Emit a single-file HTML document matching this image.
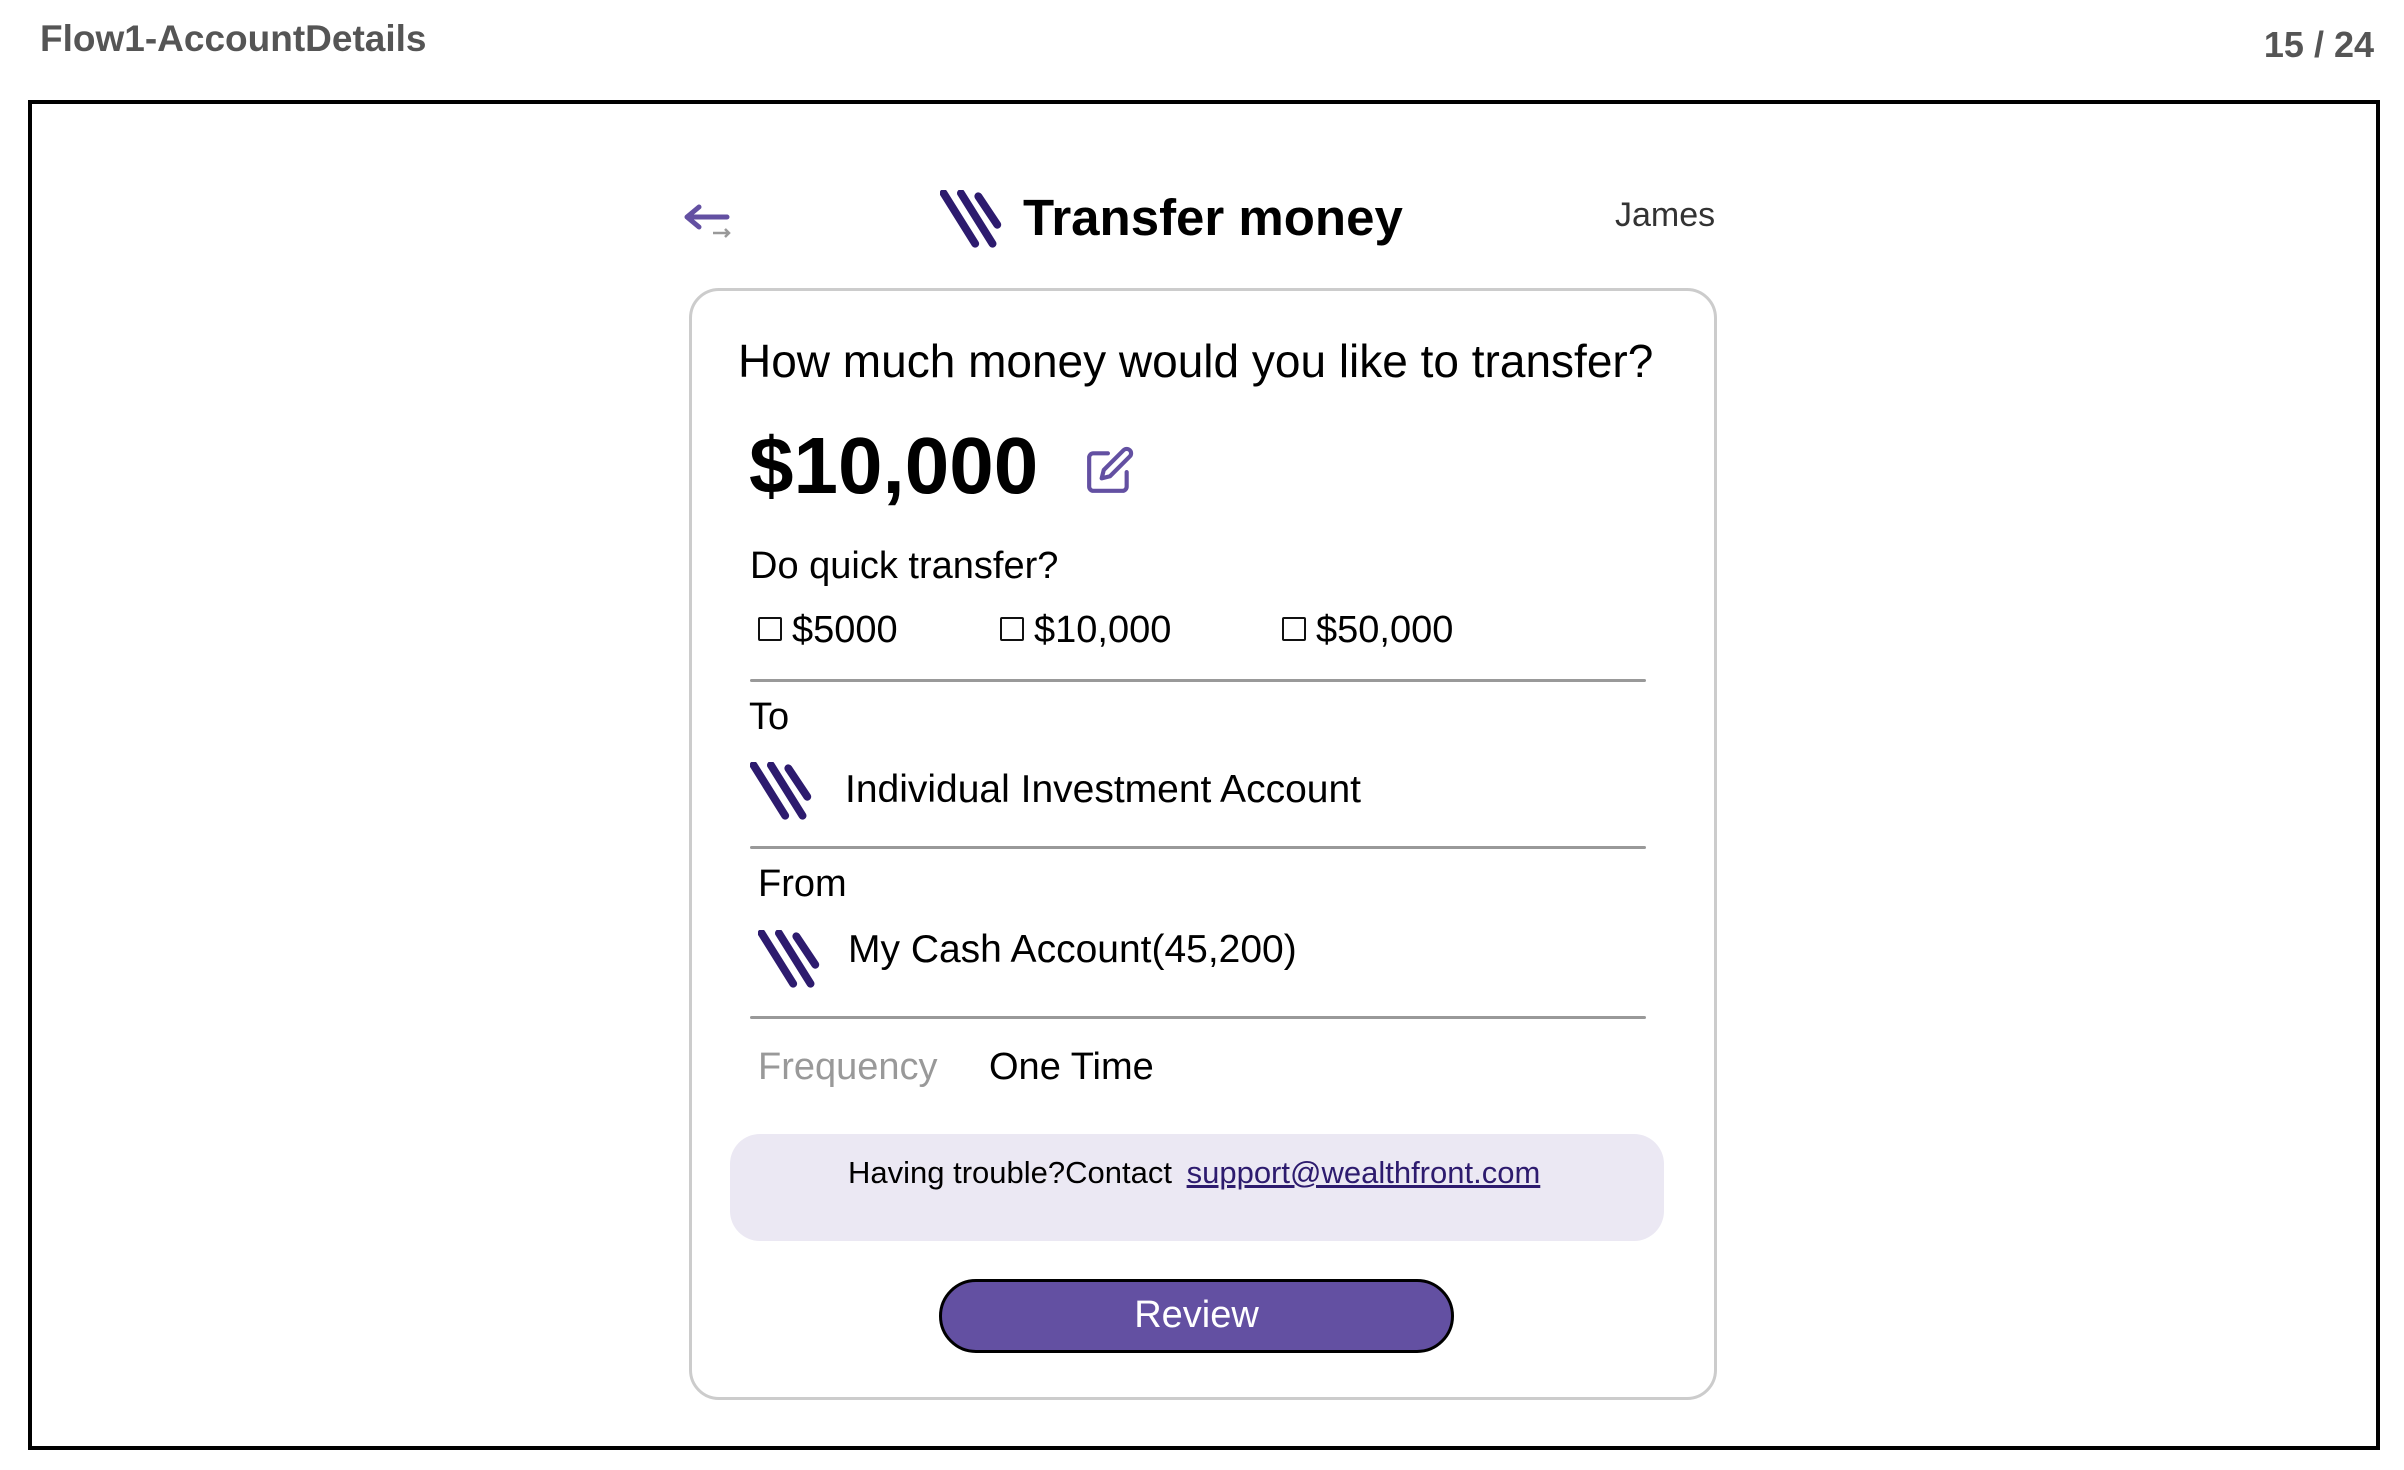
<!DOCTYPE html>
<html><head><meta charset="utf-8"><style>
*{margin:0;padding:0;box-sizing:border-box}
body{width:2404px;height:1470px;background:#fff;position:relative;font-family:"Liberation Sans",sans-serif;overflow:hidden;color:#000}
.a{position:absolute;white-space:nowrap}
.line{position:absolute;left:750px;width:896px;height:3px;background:#999;border-radius:2px}
.cb{display:inline-block;width:24px;height:24px;border:2.5px solid #111;border-radius:2px;vertical-align:middle;margin-right:10px;position:relative;top:-3px}
</style></head><body>
<div class="a" style="left:40px;top:18px;font-size:37px;font-weight:bold;color:#555">Flow1-AccountDetails</div>
<div class="a" style="right:30px;top:24px;font-size:36px;font-weight:bold;color:#555">15 / 24</div>
<div class="a" style="left:28px;top:100px;width:2352px;height:1350px;border:4px solid #000"></div>

<svg class="a" style="left:683px;top:203px" width="52" height="36" viewBox="0 0 52 36"><path d="M16 4 L4 14 L16 24 M4 14 H44" fill="none" stroke="#6350a2" stroke-width="5" stroke-linecap="round" stroke-linejoin="round"/><path d="M30 30 H46 M42 26 L46 30 L42 34" fill="none" stroke="#999" stroke-width="2.5"/></svg>

<svg class="a" style="left:940px;top:190px" width="64" height="60" viewBox="0 0 40 38"><g stroke="#2d1b6e" stroke-width="5" stroke-linecap="round"><line x1="2" y1="2" x2="22" y2="34"/><line x1="13" y1="2" x2="33" y2="34"/><line x1="24" y1="4" x2="36" y2="22"/></g></svg>
<div class="a" style="left:1023px;top:188px;font-size:51px;font-weight:bold">Transfer money</div>
<div class="a" style="left:1615px;top:196px;font-size:34px;color:#333">James</div>

<div class="a" style="left:689px;top:288px;width:1028px;height:1112px;border:3px solid #ccc;border-radius:30px"></div>
<div class="a" style="left:738px;top:334px;font-size:46px">How much money would you like to transfer?</div>
<div class="a" style="left:749px;top:420px;font-size:80px;font-weight:bold">$10,000</div>
<svg class="a" style="left:1085px;top:445px" width="50" height="50" viewBox="0 0 24 24"><path d="M11 4H4a2 2 0 0 0-2 2v14a2 2 0 0 0 2 2h14a2 2 0 0 0 2-2v-7" fill="none" stroke="#6350a2" stroke-width="2" stroke-linecap="round"/><path d="M18.5 2.5a2.1 2.1 0 0 1 3 3L12 15l-4 1 1-4 9.5-9.5z" fill="none" stroke="#6350a2" stroke-width="2" stroke-linejoin="round"/></svg>
<div class="a" style="left:750px;top:545px;font-size:38px">Do quick transfer?</div>
<div class="a" style="left:758px;top:609px;font-size:38px"><span class="cb"></span>$5000</div>
<div class="a" style="left:1000px;top:609px;font-size:38px"><span class="cb"></span>$10,000</div>
<div class="a" style="left:1282px;top:609px;font-size:38px"><span class="cb"></span>$50,000</div>
<div class="line" style="top:679px"></div>
<div class="a" style="left:749px;top:696px;font-size:38px">To</div>
<svg class="a" style="left:750px;top:762px" width="64" height="60" viewBox="0 0 40 38"><g stroke="#2d1b6e" stroke-width="5" stroke-linecap="round"><line x1="2" y1="2" x2="22" y2="34"/><line x1="13" y1="2" x2="33" y2="34"/><line x1="24" y1="4" x2="36" y2="22"/></g></svg>
<div class="a" style="left:845px;top:768px;font-size:39px">Individual Investment Account</div>
<div class="line" style="top:846px"></div>
<div class="a" style="left:758px;top:863px;font-size:38px">From</div>
<svg class="a" style="left:758px;top:930px" width="64" height="60" viewBox="0 0 40 38"><g stroke="#2d1b6e" stroke-width="5" stroke-linecap="round"><line x1="2" y1="2" x2="22" y2="34"/><line x1="13" y1="2" x2="33" y2="34"/><line x1="24" y1="4" x2="36" y2="22"/></g></svg>
<div class="a" style="left:848px;top:928px;font-size:39px">My Cash Account(45,200)</div>
<div class="line" style="top:1016px"></div>
<div class="a" style="left:758px;top:1046px;font-size:38px;color:#999">Frequency</div>
<div class="a" style="left:989px;top:1046px;font-size:38px">One Time</div>
<div class="a" style="left:730px;top:1134px;width:934px;height:107px;background:#ebe8f3;border-radius:30px"></div>
<div class="a" style="left:848px;top:1155px;font-size:31px">Having trouble?Contact <span style="color:#2d1b6e;text-decoration:underline;margin-left:6px">support@wealthfront.com</span></div>
<div class="a" style="left:939px;top:1279px;width:515px;height:74px;background:#6350a2;border:3px solid #000;border-radius:37px;color:#fff;font-size:38px;text-align:center;line-height:66px">Review</div>
</body></html>
